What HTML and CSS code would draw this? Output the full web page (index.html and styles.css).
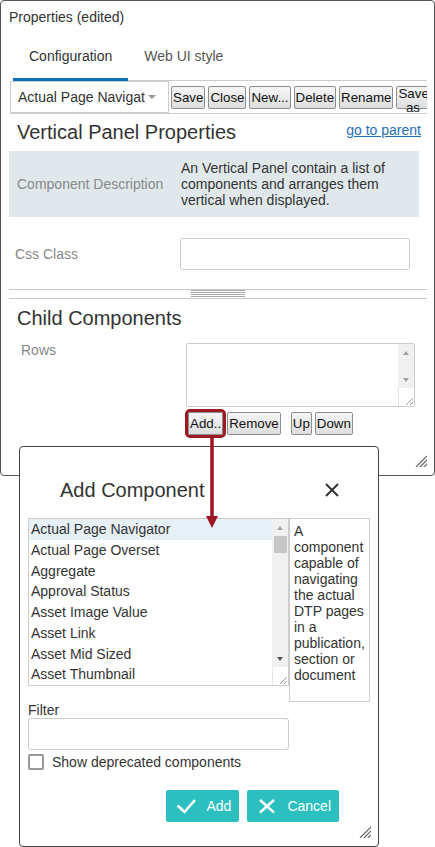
FILE: index.html
```html
<!DOCTYPE html>
<html>
<head>
<meta charset="utf-8">
<title>Properties</title>
<link rel="stylesheet" href="styles.css">
</head>
<body>
<div class="screen">
  <div class="window">
    <div class="win-title">Properties (edited)</div>
    <div class="tabs">
      <div class="tab active">Configuration</div>
      <div class="tab">Web UI style</div>
    </div>
    <div class="toolbar">
      <div class="select"><span class="select-text">Actual Page Navigat</span><span class="caret"></span></div>
      <button class="btn first">Save</button>
      <button class="btn">Close</button>
      <button class="btn">New...</button>
      <button class="btn">Delete</button>
      <button class="btn">Rename</button>
      <button class="btn saveas">Save as</button>
    </div>
    <div class="head-row">
      <h2 class="heading">Vertical Panel Properties</h2>
      <a class="link" href="#">go to parent</a>
    </div>
    <div class="desc">
      <div class="desc-label">Component Description</div>
      <div class="desc-text">An Vertical Panel contain a list of components and arranges them vertical when displayed.</div>
    </div>
    <div class="field">
      <div class="field-label">Css Class</div>
      <div class="input css-input"></div>
    </div>
    <div class="splitter"><div class="grip"></div></div>
    <h2 class="heading child-heading">Child Components</h2>
    <div class="rows">
      <div class="field-label rows-label">Rows</div>
      <div class="rows-col">
        <div class="box rows-box">
          <div class="box-area"></div>
          <div class="scroll rows-scroll">
            <div class="sb-btn"><span class="tri-up"></span></div>
            <div class="sb-track"></div>
            <div class="sb-btn"><span class="tri-down light"></span></div>
            <div class="sb-corner">
              <svg width="10" height="10" viewBox="0 0 10 10"><path d="M9 2 L2 9 M9 6 L6 9" stroke="#9a9a9a" stroke-width="1" fill="none"/></svg>
            </div>
          </div>
        </div>
        <div class="row-btns">
          <button class="btn add-btn">Add..</button>
          <button class="btn remove-btn">Remove</button>
          <button class="btn up-btn">Up</button>
          <button class="btn down-btn">Down</button>
        </div>
      </div>
    </div>
    <svg class="win-grip" width="12" height="12" viewBox="0 0 12 12"><path d="M12 1 L1 12 M12 5 L5 12 M12 9 L9 12" stroke="#666" stroke-width="1.2" fill="none"/></svg>
  </div>

  <div class="dialog">
    <div class="dlg-title">
      <h2 class="heading">Add Component</h2>
      <svg class="close" width="14" height="14" viewBox="0 0 14 14"><path d="M1 1 L13 13 M13 1 L1 13" stroke="#333" stroke-width="2" fill="none"/></svg>
    </div>
    <div class="dlg-body">
      <div class="pick">
        <div class="box list">
          <div class="items">
            <div class="item sel">Actual Page Navigator</div>
            <div class="item">Actual Page Overset</div>
            <div class="item">Aggregate</div>
            <div class="item">Approval Status</div>
            <div class="item">Asset Image Value</div>
            <div class="item">Asset Link</div>
            <div class="item">Asset Mid Sized</div>
            <div class="item">Asset Thumbnail</div>
          </div>
          <div class="scroll list-scroll">
            <div class="sb-btn"><span class="tri-up"></span></div>
            <div class="sb-track"><div class="thumb"></div></div>
            <div class="sb-btn"><span class="tri-down"></span></div>
            <div class="sb-corner">
              <svg width="10" height="10" viewBox="0 0 10 10"><path d="M9 2 L2 9 M9 6 L6 9" stroke="#9a9a9a" stroke-width="1" fill="none"/></svg>
            </div>
          </div>
        </div>
        <div class="info">A component capable of navigating the actual DTP pages in a publication, section or document</div>
      </div>
      <div class="filter-label">Filter</div>
      <div class="input filter"></div>
      <div class="check-row">
        <span class="checkbox"></span>
        <span class="check-label">Show deprecated components</span>
      </div>
      <div class="actions">
        <button class="action">
          <svg class="ico" width="20" height="16" viewBox="0 0 20 16"><path d="M1.5 7.5 L8.5 14 L19 2" stroke="#fff" stroke-width="2.6" fill="none"/></svg>
          <span>Add</span>
        </button>
        <button class="action">
          <svg class="ico" width="20" height="16" viewBox="0 0 20 16"><path d="M3 2 L17 14.5 M17 2 L3 14.5" stroke="#fff" stroke-width="2.4" fill="none"/></svg>
          <span>Cancel</span>
        </button>
      </div>
    </div>
    <svg class="dlg-grip" width="12" height="12" viewBox="0 0 12 12"><path d="M12 1 L1 12 M12 5 L5 12 M12 9 L9 12" stroke="#666" stroke-width="1.2" fill="none"/></svg>
  </div>

  <svg class="arrow" width="14" height="92" viewBox="0 0 14 92">
    <path d="M7 0 L7 81" stroke="#9e1620" stroke-width="3.5" fill="none"/>
    <polygon points="1,79 13,79 7,91" fill="#9e1620"/>
  </svg>
</div>
</body>
</html>
```

FILE: styles.css
```css
* { box-sizing: border-box; }
html, body { margin: 0; padding: 0; background: #fff; }
body {
  font-family: "Liberation Sans", Arial, sans-serif;
  font-size: 14px;
  line-height: 16px;
  color: #333;
}
.screen { position: relative; width: 435px; height: 847px; overflow: hidden; }

.window {
  position: relative;
  width: 435px;
  height: 476px;
  border: 1px solid #555;
  border-radius: 4px;
  padding: 8px 7px 0 8px;
}
.win-title { line-height: 16px; }

.tabs {
  display: flex;
  margin: 7px 0 0 4px;
  border-bottom: 1px solid #ccc;
}
.tab {
  padding: 16px 16px 14px;
  border-bottom: 3px solid transparent;
  margin-bottom: -1px;
  color: #555;
}
.tab.active { color: #333; border-bottom-color: #0b6fbc; }

.toolbar {
  display: flex;
  align-items: center;
  margin-left: 1px;
  height: 33px;
  border-bottom: 1px solid #ccc;
  overflow: hidden;
}
.select {
  flex-shrink: 0;
  display: flex;
  align-items: center;
  width: 159px;
  height: 32px;
  border: 1px solid #ccc;
  padding-left: 7px;
  background: #fff;
}
.select-text { width: 130px; overflow: hidden; white-space: nowrap; }
.caret {
  width: 0; height: 0;
  border-left: 4.5px solid transparent;
  border-right: 4.5px solid transparent;
  border-top: 4px solid #999;
}

.btn {
  flex-shrink: 0;
  font-family: "Liberation Sans", Arial, sans-serif;
  font-size: 13.333px;
  line-height: 15px;
  height: 23px;
  padding: 0 1px;
  margin: 0 0 0 3px;
  border: 1px solid #8e8e8e;
  border-radius: 2px;
  background: linear-gradient(#f6f6f6, #dddddd);
  color: #111;
  overflow: visible;
}
.btn.first { margin-left: 2px; }
.btn.saveas { width: 33px; white-space: normal; line-height: 14px; }

.head-row {
  display: flex;
  justify-content: space-between;
  align-items: flex-start;
  margin-top: 6px;
  padding: 0 6px 0 8px;
}
.heading {
  margin: 0;
  font-size: 20px;
  line-height: 24px;
  font-weight: normal;
  color: #333;
}
.link { margin-top: 2px; color: #1f6fb8; text-decoration: underline; }

.desc {
  display: flex;
  align-items: center;
  margin: 7px 8px 0 0;
  padding: 9px 8px;
  background: #e1e8eb;
}
.desc-label { width: 164px; flex-shrink: 0; color: #888; }
.desc-text { flex: 1; }

.field { display: flex; align-items: center; margin-top: 21px; padding-left: 6px; }
.field-label { width: 165px; flex-shrink: 0; color: #888; }
.input {
  height: 32px;
  border: 1px solid #ccc;
  border-radius: 3px;
  background: #fff;
}
.css-input { width: 230px; }

.splitter {
  margin-top: 19px;
  height: 10px;
  border-top: 1px solid #c8c8c8;
  border-bottom: 1px solid #c8c8c8;
}
.grip {
  width: 54px;
  height: 7px;
  margin: 0 auto;
  background: repeating-linear-gradient(to bottom, #a8a8a8 0 1px, transparent 1px 2px);
}

.child-heading { margin-top: 7px; padding-left: 8px; }

.rows { display: flex; align-items: flex-start; margin-top: 13px; padding-left: 12px; }
.rows-label { margin-top: -1px; }
.rows-col { display: flex; flex-direction: column; }

.box { display: flex; border: 1px solid #ccc; background: #fff; }
.rows-box { width: 229px; height: 64px; border-radius: 2px; }
.box-area { flex: 1; }

.scroll { width: 16px; display: flex; flex-direction: column; background: #f0f0f0; }
.sb-btn { height: 17px; display: flex; align-items: center; justify-content: center; flex-shrink: 0; }
.sb-track { flex: 1; display: flex; justify-content: center; }
.sb-corner {
  height: 18px;
  flex-shrink: 0;
  background: #fff;
  border-left: 1px solid #e4e4e4;
  display: flex;
  align-items: flex-end;
  justify-content: flex-end;
}
.tri-up {
  width: 0; height: 0;
  border-left: 3.5px solid transparent;
  border-right: 3.5px solid transparent;
  border-bottom: 4px solid #a3a3a3;
}
.tri-down {
  width: 0; height: 0;
  border-left: 3.5px solid transparent;
  border-right: 3.5px solid transparent;
  border-top: 4px solid #505050;
}
.tri-down.light { border-top-color: #a3a3a3; }
.rows-scroll .sb-track { height: 10px; flex: none; }

.row-btns { display: flex; align-items: center; margin-top: 5px; }
.add-btn { margin-left: 2px; outline: 3px solid #9b1b24; outline-offset: 0; }
.remove-btn { margin-left: 4px; }
.up-btn { margin-left: 10px; }
.down-btn { margin-left: 3px; }

.win-grip { position: absolute; right: 7px; bottom: 8px; }

.dialog {
  position: absolute;
  left: 19px;
  top: 446px;
  width: 360px;
  height: 401px;
  border: 1px solid #444;
  border-radius: 4px;
  background: #fff;
}
.dlg-title {
  display: flex;
  justify-content: space-between;
  align-items: center;
  padding: 31px 39px 0 40px;
}
.dlg-body { padding: 16px 0 0 8px; }
.pick { display: flex; align-items: flex-start; }
.list { width: 261px; height: 168px; }
.items { flex: 1; overflow: hidden; }
.item { line-height: 20.75px; padding-left: 2px; white-space: nowrap; }
.item.sel { background: #e6f0f7; }
.thumb { width: 13px; height: 17px; background: #c6c6c6; }
.info {
  width: 81px;
  height: 184px;
  border: 1px solid #ccc;
  padding: 4px 2px 0 4px;
}
.filter-label { line-height: 16px; }
.filter { width: 261px; }
.check-row { display: flex; align-items: center; margin-top: 4px; }
.checkbox {
  width: 16px;
  height: 16px;
  border: 2px solid #9a9a9a;
  border-radius: 2px;
  margin-right: 8px;
}
.actions {
  display: flex;
  justify-content: flex-end;
  gap: 8px;
  margin-top: 20px;
  padding-right: 39px;
}
.action {
  display: flex;
  align-items: center;
  gap: 10px;
  height: 32px;
  padding: 0 8px 0 10px;
  border: none;
  border-radius: 2px;
  background: #2cbfbf;
  color: #fff;
  font-family: "Liberation Sans", Arial, sans-serif;
  font-size: 14px;
  line-height: 16px;
}
.ico { display: block; }
.dlg-grip { position: absolute; right: 7px; bottom: 8px; }

.arrow { position: absolute; left: 205px; top: 437px; }
```
